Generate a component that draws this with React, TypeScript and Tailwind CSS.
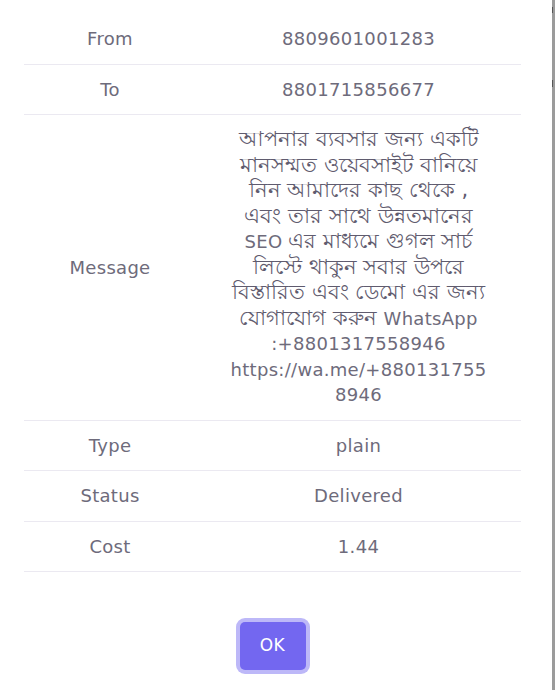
import React from "react";

type Seg = { t: string; bn?: boolean };

const messageLines: Seg[][] = [
  [{ t: "আপনার ব্যবসার জন্য একটি", bn: true }],
  [{ t: "মানসম্মত ওয়েবসাইট বানিয়ে", bn: true }],
  [{ t: "নিন আমাদের কাছ থেকে ,", bn: true }],
  [{ t: "এবং তার সাথে উন্নতমানের", bn: true }],
  [{ t: "SEO " }, { t: "এর মাধ্যমে গুগল সার্চ", bn: true }],
  [{ t: "লিস্টে থাকুন সবার উপরে", bn: true }],
  [{ t: "বিস্তারিত এবং ডেমো এর জন্য", bn: true }],
  [{ t: "যোগাযোগ করুন ", bn: true }, { t: "WhatsApp" }],
  [{ t: ":+8801317558946" }],
  [{ t: "https://wa.me/+880131755" }],
  [{ t: "8946" }],
];

function Message() {
  return (
    <div className="flex flex-col items-center">
      {messageLines.map((line, i) => (
        <div key={i} className="h-[25.5px] whitespace-nowrap leading-[25.5px]">
          {line.map((s, j) =>
            s.bn ? (
              <span key={j} className="text-[21px] leading-[25.5px] tracking-normal text-[#5f5b6e]">
                {s.t}
              </span>
            ) : (
              <span key={j}>{s.t}</span>
            )
          )}
        </div>
      ))}
    </div>
  );
}

const rows: { label: string; value: React.ReactNode }[] = [
  { label: "From", value: "8809601001283" },
  { label: "To", value: "8801715856677" },
  { label: "Message", value: <Message /> },
  { label: "Type", value: "plain" },
  { label: "Status", value: "Delivered" },
  { label: "Cost", value: "1.44" },
];

export default function App() {
  return (
    <div
      className="flex h-[690px] w-[555px] overflow-hidden bg-white text-[#6e6b7b]"
      style={{ fontFamily: '"DejaVu Sans", "Noto Sans", sans-serif' }}
    >
      <div className="flex w-[552px] flex-col pl-[24px] pr-[31px] pt-[14px]">
        <table className="w-[497px] table-fixed border-collapse text-[18px] leading-[25.5px] tracking-[0.3px]">
          <colgroup>
            <col className="w-[172px]" />
            <col className="w-[325px]" />
          </colgroup>
          <tbody>
            {rows.map((r) => (
              <tr key={r.label} className="border-b border-[#ebe9f1]">
                <td className="px-[16px] py-[12px] text-center align-middle">{r.label}</td>
                <td className="px-[36px] py-[12px] text-center align-middle">{r.value}</td>
              </tr>
            ))}
          </tbody>
        </table>
        <div className="flex w-[497px] justify-center pt-[50px]">
          <button className="h-[48px] w-[66px] rounded-[5px] bg-[#7367f0] text-[17px] font-medium tracking-[0.5px] text-white shadow-[0_0_0_4px_#bdb8f8]">
            OK
          </button>
        </div>
      </div>
      <div className="flex w-[3px] flex-col bg-[#9b9b9b]">
        <div className="mt-[7px] h-[6px] w-[1px] bg-[#555]" />
        <div className="mt-[67px] h-[7px] w-[1px] bg-[#555]" />
      </div>
    </div>
  );
}
